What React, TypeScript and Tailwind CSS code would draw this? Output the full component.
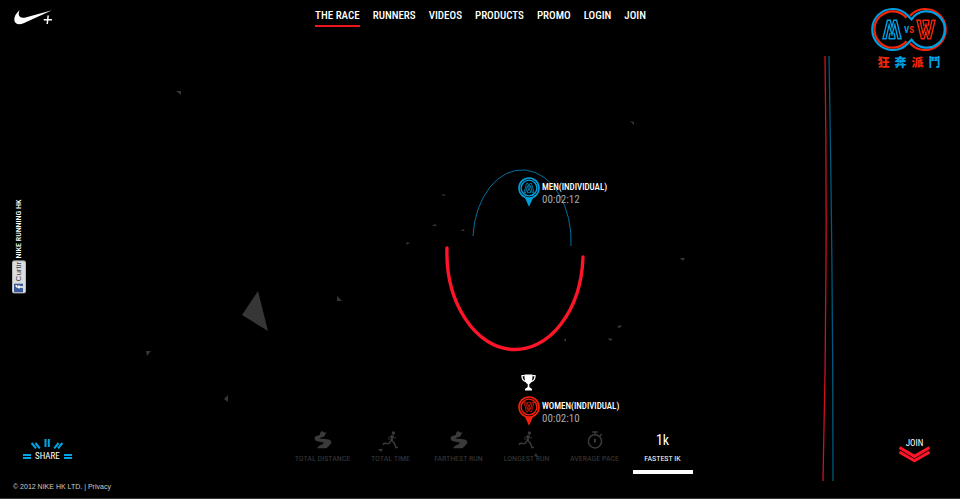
import type { ReactNode } from "react";

const NAV = ["THE RACE", "RUNNERS", "VIDEOS", "PRODUCTS", "PROMO", "LOGIN", "JOIN"];

const SHARDS = [
  "M258 291 L268 331 L242 315 Z",
  "M176 91 h5 v4 Z",
  "M630 121 l4 1 v3 Z",
  "M441 195 l3 -1 l2 2 Z",
  "M432 226 l3 -2 l2 2 Z",
  "M461 231 l2 -2 l2 2 Z",
  "M406 245 l1 -3 l3 1 Z",
  "M680 258 h5 l-2 3 Z",
  "M337 296 l5 5 h-5 Z",
  "M617 327 l3 -2 l2 1 l-3 2 Z",
  "M608 338 l5 1 l-3 2 Z",
  "M564 340 l2 -2 v4 Z",
  "M146 351 h5 l-4 5 Z",
  "M224 399 l4 -4 v7 Z",
  "M378 449 h5 l-2 3 Z",
  "M534 456 l2 -3 l2 4 Z",
];

function Sky() {
  return (
    <svg
      className="absolute inset-0 h-full w-full"
      viewBox="0 0 960 499"
      preserveAspectRatio="xMidYMid slice"
      fill="none"
      aria-hidden="true"
    >
      {SHARDS.map((d) => (
        <path key={d} d={d} fill="#363636" />
      ))}
      <path d="M473 236 A49 71 0 0 1 571 246" stroke="#00709d" strokeWidth="1" />
      <path d="M447 248 A68 97 0 0 0 583 257" stroke="#ff1428" strokeWidth="3.4" strokeLinecap="round" />
      <path d="M825 56 Q828 270 823 481" stroke="#d0101f" strokeWidth="1.3" />
      <path d="M829 56 Q833 270 833 481" stroke="#00587c" strokeWidth="1.3" />
    </svg>
  );
}

// striped emblem shared by the badge and the pins, 20 x 20
function Emblem() {
  return (
    <g fill="none" strokeWidth="1.4">
      <path d="M0.9 19.3 L5.4 0.8 H8.2 L10 7.6 L11.8 0.8 H14.6 L19.1 19.3 H16 L12.9 5.4 L10 15 L7.1 5.4 L4 19.3 Z" />
      <path d="M6.8 19.3 L8 13.4 M13.2 19.3 L12 13.4 M6.8 19.3 H13.2" />
    </g>
  );
}

function BattleLogo() {
  return (
    <svg className="h-[44px] w-[78px]" viewBox="870 7 78 44" fill="none" role="img" aria-label="M vs W">
      <g strokeWidth="2.2">
        <path d="M908 15.8 A20.5 20.5 0 1 0 908 43.2" stroke="#009fe3" />
        <path d="M906.5 17.7 A18.2 18.2 0 1 0 906.5 41.3" stroke="#f5250a" />
        <path d="M910 15.8 A20.5 20.5 0 1 1 910 43.2" stroke="#f5250a" />
        <path d="M907.6 15.4 l3.9 3.9 A18.2 18.2 0 1 1 911.5 39.7 l-3.9 3.9" stroke="#009fe3" />
      </g>
      <g transform="translate(882 19.5)" stroke="#009fe3">
        <Emblem />
      </g>
      <g transform="translate(916 39.5) scale(1 -1)" stroke="#f5250a">
        <Emblem />
      </g>
      <text x="904" y="32.5" fontSize="9" fontWeight="700" fontFamily="Roboto Condensed, Liberation Sans, sans-serif">
        <tspan fill="#009fe3">V</tspan>
        <tspan fill="#f5250a">S</tspan>
      </text>
    </svg>
  );
}

function Swoosh() {
  return (
    <svg className="h-[16px] w-[40px]" viewBox="13 9 40 16" fill="#fff" aria-hidden="true">
      <path d="M19.5 10 C15.5 14 13.8 17.4 14.4 20.8 C15.2 24.6 19.2 24.8 23.6 23.3 L52 10.3 L25.5 17.4 C20 18.8 17.4 16 19.5 10 Z" />
      <path d="M48.2 15.5 L47.2 24 M43.7 19.8 H52" stroke="#fff" strokeWidth="1.5" />
    </svg>
  );
}

function RoadIcon() {
  return (
    <svg className="h-[18px] w-[18px]" viewBox="0 0 18 18" fill="currentColor" aria-hidden="true">
      <path d="M8 0 l2.5 1.6 H13 l-2.3 2.2 C12 5 10 5.8 7.4 6.4 C5 7 5.4 7.6 8 7.8 C13 8 17.4 8.6 17.3 11 C17.2 13.6 14 15 12.6 17.2 H3.4 C4 14.6 7.6 14 9.2 12.8 C10.4 11.8 9.6 11.4 7 11 C3.6 10.6 0.4 9.6 0.6 7.2 C0.8 5 4 4.6 6.6 3.8 L5.6 2.4 Z" />
    </svg>
  );
}

function RunnerIcon() {
  return (
    <svg className="h-[18px] w-[18px]" viewBox="0 0 18 18" fill="none" stroke="currentColor" aria-hidden="true">
      <circle cx="11.4" cy="2" r="1.7" fill="currentColor" stroke="none" />
      <path d="M10.4 4.2 L9.4 10" strokeWidth="2.4" />
      <path d="M10 4.6 L7 6.4 L6.8 8.8 M10.8 4.8 L12.4 7.4 L13.8 6.2" strokeWidth="1" />
      <path d="M9 9.6 L7 12.6 L2 12.2 L1 14 M9.8 9.6 L12.2 12 L14 16.6 L15.8 16.2" strokeWidth="1.4" />
    </svg>
  );
}

function StopwatchIcon() {
  return (
    <svg className="h-[18px] w-[18px]" viewBox="0 0 18 18" fill="none" stroke="currentColor" strokeWidth="1.5" aria-hidden="true">
      <circle cx="9" cy="10.3" r="6.6" />
      <path d="M6.2 0.9 H11.8 M9 1 V3.6 M14 4.8 L15.8 3" />
      <path d="M9 7.8 V11.6" strokeWidth="2" />
    </svg>
  );
}

function TrophyIcon() {
  return (
    <svg className="ml-[3px] h-[17px] w-[15px]" viewBox="0 0 15 17" fill="none" stroke="#fff" aria-hidden="true">
      <path d="M3.4 0.4 H11.6 C11.6 6 10.4 9 8.3 10 V13 L11 15 V16.6 H4 V15 L6.7 13 V10 C4.6 9 3.4 6 3.4 0.4 Z" fill="#fff" stroke="none" />
      <path d="M3.6 1.6 H1 C0.8 4.6 2.4 7 5.4 7.8 M11.4 1.6 H14 C14.2 4.6 12.6 7 9.6 7.8" strokeWidth="1.3" />
    </svg>
  );
}

type PinProps = { color: string; flip?: boolean; name: string; time: string };

function Pin({ color, flip, name, time }: PinProps) {
  return (
    <div className="flex gap-[2px] whitespace-nowrap">
      <svg className="h-[30px] w-[22px]" viewBox="0 0 22 30" fill="none" stroke={color} aria-hidden="true">
        <path d="M7 21 H15 L11 29.8 Z" fill={color} stroke="none" />
        <circle cx="11" cy="11" r="10" strokeWidth="1.6" />
        <circle cx="11" cy="11" r="7.9" strokeWidth="1.4" />
        <g transform={flip ? "translate(5.5 16) scale(0.55 -0.5)" : "translate(5.5 6) scale(0.55 0.5)"}>
          <Emblem />
        </g>
      </svg>
      <div className="pt-1">
        <div className="text-[9px] leading-[12px] font-medium text-white">{name}</div>
        <div className="text-[11px] leading-[13px] text-[#aaa]">{time}</div>
      </div>
    </div>
  );
}

const TABS: { label: string; icon: ReactNode; active?: boolean }[] = [
  { label: "TOTAL DISTANCE", icon: <RoadIcon /> },
  { label: "TOTAL TIME", icon: <RunnerIcon /> },
  { label: "FARTHEST RUN", icon: <RoadIcon /> },
  { label: "LONGEST RUN", icon: <RunnerIcon /> },
  { label: "AVERAGE PACE", icon: <StopwatchIcon /> },
  { label: "FASTEST IK", icon: <span className="text-[14px]">1k</span>, active: true },
];

function ShareButton() {
  return (
    <button type="button" className="flex flex-col items-center justify-self-start text-[9px] leading-[12px] text-white">
      <svg className="h-[10px] w-[34px]" viewBox="0 0 34 10" stroke="#00a4e4" strokeWidth="2" fill="none" aria-hidden="true">
        <path d="M15.5 0 V8 M18.8 0 V8 M1.6 4 L6 9.4 M5.4 4 L9.8 9.4 M28.6 4 L24.2 9.4 M32.4 4 L28 9.4" />
      </svg>
      <span className="mt-px flex items-center gap-1">
        <span className="h-[5px] w-2 border-y-2 border-[#00a4e4]" />
        SHARE
        <span className="h-[5px] w-2 border-y-2 border-[#00a4e4]" />
      </span>
    </button>
  );
}

export default function App() {
  return (
    <div className="relative flex min-h-screen flex-col overflow-hidden bg-black font-['Roboto_Condensed','Liberation_Sans_Narrow','Liberation_Sans',sans-serif] text-white">
      <Sky />

      <header className="relative grid grid-cols-[1fr_auto_1fr] items-start pr-3 pl-[13px]">
        <a href="#home" aria-label="Home" className="mt-[9px] justify-self-start">
          <Swoosh />
        </a>
        <nav className="mt-2 flex gap-[13px] text-[11px] leading-[16px] font-medium">
          {NAV.map((item, i) => (
            <a
              key={item}
              href="#nav"
              className={i === 0 ? "border-b-2 border-[#f0141e] pb-px" : "pb-px"}
            >
              {item}
            </a>
          ))}
        </nav>
        <a href="#battle" className="mt-[7px] flex flex-col items-center justify-self-end">
          <BattleLogo />
          <span className="mt-1 flex gap-[5px] font-['Noto_Sans_CJK_TC',sans-serif] text-[12px] leading-[13px] font-black">
            <span className="text-[#f5250a]">狂</span>
            <span className="text-[#009fe3]">奔</span>
            <span className="text-[#f5250a]">派</span>
            <span className="text-[#009fe3]">鬥</span>
          </span>
        </a>
      </header>

      <main className="relative flex flex-1 items-center pb-[6px] pl-3">
        <div className="flex rotate-180 items-center gap-[2px] [writing-mode:vertical-rl]">
          <button
            type="button"
            className="flex w-[14px] items-center gap-[2px] rounded-xs border border-[#b8b8b8] bg-[#dcdde0] py-[2px] font-['Liberation_Sans',sans-serif] text-[8px] leading-[12px] text-[#444]"
          >
            <svg className="h-[9px] w-[9px] shrink-0 rotate-90" viewBox="0 0 9 9" aria-label="Facebook">
              <rect width="9" height="9" fill="#3b5998" />
              <path d="M5.4 9 V3.4 Q5.4 2 7.4 2.2 M3.8 4.9 H7.2" stroke="#fff" strokeWidth="1.4" fill="none" />
            </svg>
            Curtir
          </button>
          <span className="text-[8px] leading-[12px] font-medium">NIKE RUNNING HK</span>
        </div>
      </main>

      <div className="absolute top-[177px] left-1/2 ml-[38px]">
        <Pin color="#009fdc" name="MEN(INDIVIDUAL)" time="00:02:12" />
      </div>
      <div className="absolute top-[374px] left-1/2 ml-[38px] flex flex-col gap-[5px]">
        <TrophyIcon />
        <Pin color="#f5200a" flip name="WOMEN(INDIVIDUAL)" time="00:02:10" />
      </div>

      <div className="relative grid grid-cols-[1fr_auto_1fr] items-start pr-[30px] pl-[23px]">
        <div className="pt-[8px]">
          <ShareButton />
        </div>
        <div className="ml-8 flex gap-2">
          {TABS.map((tab) => (
            <button
              key={tab.label}
              type="button"
              className={
                tab.active
                  ? "flex w-15 flex-col items-center border-b-4 border-white text-white"
                  : "flex w-15 flex-col items-center border-b-4 border-transparent text-[#3a3a3a]"
              }
            >
              <span className="flex h-[18px] items-center">{tab.icon}</span>
              <span className="mt-1 pb-[5px] text-[8px] leading-[12px] whitespace-nowrap">{tab.label}</span>
            </button>
          ))}
        </div>
        <button type="button" className="mt-[7px] flex flex-col items-center justify-self-end text-[9px] leading-[10px]">
          JOIN
          <svg className="-mt-[2px] h-[17px] w-[31px]" viewBox="0 0 31 17" fill="none" stroke="#ff1428" strokeWidth="3" aria-hidden="true">
            <path d="M0.5 1.6 L15.5 10.4 L30.5 1.6 M0.5 6 L15.5 14.8 L30.5 6" />
          </svg>
        </button>
      </div>

      <footer className="relative mt-2 border-b border-[#3a3632] px-[13px] pb-[6px] font-['Liberation_Sans',sans-serif] text-[7px] leading-[10px] text-[#ccc]">
        © 2012 NIKE HK LTD. | <a href="#privacy">Privacy</a>
      </footer>
    </div>
  );
}
